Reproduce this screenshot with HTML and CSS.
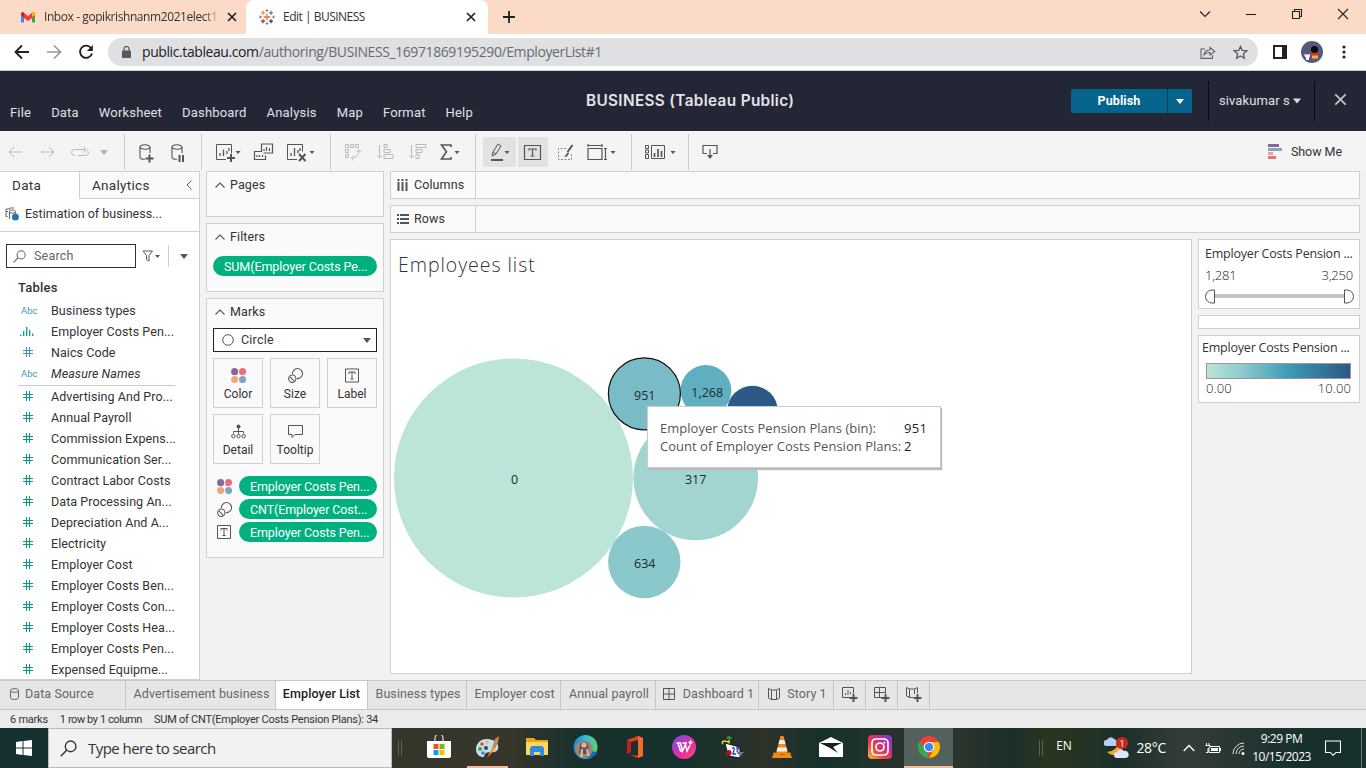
FILE: index.html
```html
<!DOCTYPE html>
<html lang="en">
<head>
<meta charset="utf-8">
<title>Edit | BUSINESS</title>
<link rel="stylesheet" href="styles.css">
</head>
<body>
<svg class="defs" width="0" height="0">
  <defs>
    <symbol id="hash" viewBox="0 0 10 10"><path d="M3.5 0v10M6.5 0v10M0 3.5h10M0 6.5h10" fill="none" stroke="currentColor" stroke-width="1.1"/></symbol>
    <symbol id="caret" viewBox="0 0 8 5"><path d="M0 0h8L4 5z" fill="currentColor"/></symbol>
    <symbol id="up" viewBox="0 0 10 6"><path d="M.5 5.5L5 1l4.500 4.500" fill="none" stroke="currentColor" stroke-width="1.1"/></symbol>
    <symbol id="dots" viewBox="0 0 14 14"><circle cx="3.400" cy="3.400" r="3.300" fill="#866a93"/><circle cx="10.800" cy="3.400" r="3.300" fill="#ee6e7d"/><circle cx="3.400" cy="10.800" r="3.300" fill="#f0a679"/><circle cx="10.800" cy="10.800" r="3.300" fill="#7fa5c4"/></symbol>
    <symbol id="size" viewBox="0 0 14 14"><g fill="none" stroke="currentColor"><path d="M4.200 5.700a4.700 4.700 0 1 1 4.200 4.200"/><circle cx="4" cy="10" r="3.400"/><path d="M1.800 8.200l4 4"/></g></symbol>
    <symbol id="label" viewBox="0 0 14 14"><g fill="none" stroke="currentColor"><path d="M.5.500h13v13H.5zM4 5.500v-2h6v2M7 3.500v7M5.500 10.500h3"/></g></symbol>
    <symbol id="zoomglass" viewBox="0 0 16 16"><circle cx="10" cy="6" r="5" fill="none" stroke="currentColor" stroke-width="1.300"/><path d="M6.500 9.500L.7 15.300" fill="none" stroke="currentColor" stroke-width="1.400"/></symbol>
    <symbol id="cross" viewBox="0 0 10 10"><path d="M1 1l8 8M9 1L1 9" fill="none" stroke="currentColor" stroke-width="1.700"/></symbol>
    <symbol id="cyl" viewBox="0 0 16 18"><g fill="none" stroke="currentColor" stroke-width="1.100"><ellipse cx="6" cy="3" rx="5" ry="2.200"/><path d="M1 3v10c0 1.500 2.500 2.300 5 2.300M11 3v6"/></g></symbol>
    <linearGradient id="insta" x1="0" y1="1" x2="1" y2="0"><stop offset="0" stop-color="#fdc046"/><stop offset=".35" stop-color="#f0443e"/><stop offset=".65" stop-color="#c82b91"/><stop offset="1" stop-color="#6b3ddd"/></linearGradient>
    <linearGradient id="wps" x1="0" y1="0" x2="1" y2="1"><stop offset="0" stop-color="#6b4cf0"/><stop offset=".6" stop-color="#e92f9b"/><stop offset="1" stop-color="#fb4f71"/></linearGradient>
    <linearGradient id="edge" x1="0" y1="0" x2="1" y2="0"><stop offset="0" stop-color="#1a82cf"/><stop offset=".5" stop-color="#30bcdc"/><stop offset="1" stop-color="#5bd75f"/></linearGradient>
  </defs>
</svg>

<div class="tabstrip">
  <div class="tab">
    <svg class="gmail" width="14" height="11" viewBox="0 0 14 11"><path d="M0 2v8.500h3V4z" fill="#4285f4"/><path d="M14 2v8.500h-3V4z" fill="#34a853"/><path d="M0 1.500V4l7 5 7-5V1.500L12 0 7 4 2 0z" fill="#ea4335"/><path d="M11 .8V5l3-2V1.500Q13-.5 11 .8" fill="#fbbc04"/><path d="M3 .8V5L0 3V1.500Q1-.5 3 .8" fill="#c5221f"/></svg>
    <span class="tab-title faded">Inbox - gopikrishnanm2021elect1</span>
    <svg class="tab-x" width="10" height="10"><use href="#cross"/></svg>
  </div>
  <div class="tab active">
    <svg width="16" height="16" viewBox="0 0 16 16" fill="none" stroke-width="1.300"><path d="M8 4.500v7M4.500 8h7" stroke="#e8762d"/><path d="M4 1.800v4M2 3.800h4" stroke="#e8932d"/><path d="M12 1.800v4M10 3.800h4" stroke="#597e9b"/><path d="M4 10.200v4M2 12.200h4" stroke="#c72035"/><path d="M12 10.200v4M10 12.200h4" stroke="#1f447e"/><path d="M8 0v3M6.500 1.500h3M8 13v3M6.500 14.500h3M0 8h3M1.500 6.500v3M13 8h3M14.500 6.500v3" stroke="#6f88a8" stroke-width="1"/></svg>
    <span class="tab-title">Edit | BUSINESS</span>
    <svg class="tab-x" width="10" height="10"><use href="#cross"/></svg>
  </div>
  <svg class="newtab" width="12" height="12" viewBox="0 0 12 12"><path d="M6 0v12M0 6h12" stroke="#222" stroke-width="1.800"/></svg>
  <div class="winctl">
    <svg width="12" height="12" viewBox="0 0 12 12"><path d="M1 3.500l5 5 5-5"/></svg>
    <svg width="12" height="12" viewBox="0 0 12 12"><path d="M1 6.500h10"/></svg>
    <svg width="12" height="12" viewBox="0 0 12 12"><path d="M1.500 3.500h7v7h-7zM3.500 3V1.500h7v7H9"/></svg>
    <svg width="12" height="12" viewBox="0 0 12 12"><path d="M1 1l10 10M11 1L1 11"/></svg>
  </div>
</div>

<div class="navbar">
  <svg class="nav-i" width="16" height="16" viewBox="0 0 16 16"><path d="M15 8H2M8 1.500L1.500 8 8 14.500" fill="none" stroke="#222" stroke-width="1.900"/></svg>
  <svg class="nav-i" width="16" height="16" viewBox="0 0 16 16"><path d="M1 8h13M8 1.500L14.500 8 8 14.500" fill="none" stroke="#999" stroke-width="1.700"/></svg>
  <svg class="nav-i" width="16" height="16" viewBox="0 0 16 16"><path d="M13 4A6.100 6.100 0 1 0 14 9.500" fill="none" stroke="#222" stroke-width="1.900"/><path d="M14.900 1v6h-6z" fill="#222"/></svg>
  <div class="omnibox">
    <svg width="9" height="12" viewBox="0 0 9 12"><path d="M2 5V3a2.500 2.500 0 0 1 5 0v2" fill="none" stroke="#55585c" stroke-width="1.200"/><rect y="4.500" width="9" height="7.500" rx="1" fill="#55585c"/></svg>
    <span class="url"><b>public.tableau.com</b>/authoring/BUSINESS_16971869195290/EmployerList#1</span>
    <svg class="share" width="16" height="14" viewBox="0 0 16 14"><path d="M5 4H1v9.400h11.500V10M4 10c.5-4 3-5 6-5V2.500L14.800 6.500 10 10V7.500c-3 0-4.500.5-6 2.500z" fill="none" stroke="#5f6368" stroke-width="1.100"/></svg>
    <svg width="15" height="15" viewBox="0 0 15 15"><path d="M7.500 1.500l1.800 4 4.500.4-3.400 2.900 1 4.400-3.900-2.300-3.900 2.300 1-4.400L1.200 5.900l4.500-.4z" fill="none" stroke="#55585c" stroke-width="1.300"/></svg>
  </div>
  <svg class="side-i" width="14" height="14" viewBox="0 0 14 14"><path d="M1 1h12v12H1z" fill="none" stroke="#222" stroke-width="2"/><path d="M9 0h5v14H9z" fill="#222"/></svg>
  <svg class="avatar" width="22" height="22" viewBox="0 0 22 22"><circle cx="11" cy="11" r="11" fill="#57597b"/><rect x="10" y="10" width="7" height="5" rx="1" fill="#d8322b"/><path d="M11 14.500h6v3h-6z" fill="#f0b43c"/><circle cx="13.500" cy="8.500" r="3.600" fill="#0c0b0e"/><path d="M3.500 12.500l1.300 1h2.700l1.300-1v3.500L8 16.500V19H5v-2.500L3.500 15z" fill="#fff"/></svg>
  <svg width="4" height="14" viewBox="0 0 4 14" fill="#222"><circle cx="2" cy="2" r="1.600"/><circle cx="2" cy="7" r="1.600"/><circle cx="2" cy="12" r="1.600"/></svg>
</div>

<header class="apphead">
  <nav class="menu"><span>File</span><span>Data</span><span>Worksheet</span><span>Dashboard</span><span>Analysis</span><span>Map</span><span>Format</span><span>Help</span></nav>
  <div class="doc-title">BUSINESS (Tableau Public)</div>
  <div class="head-right">
    <div class="publish"><span>Publish</span><i><svg width="8" height="5"><use href="#caret"/></svg></i></div>
    <div class="user">sivakumar s<svg width="8" height="6"><use href="#caret"/></svg></div>
    <svg class="closebook" width="13" height="13" viewBox="0 0 10 10"><path d="M1 1l8 8M9 1L1 9" fill="none" stroke="currentColor" stroke-width="1.300"/></svg>
  </div>
</header>

<div class="toolbar">
  <div class="tg g1 off">
    <svg width="14" height="12" viewBox="0 0 14 12"><path d="M14 6H1.500M6 1L1 6l5 5"/></svg>
    <svg width="14" height="12" viewBox="0 0 14 12"><path d="M0 6h12.500M8 1l5 5-5 5"/></svg>
    <svg width="19" height="12" viewBox="0 0 19 12"><path d="M4 9.500a3.500 3 0 0 1 0-6h10M12 .5l3.500 3L12 6.500M16 4a3.200 3 0 0 1-1.500 5.500H7"/></svg>
    <svg width="8" height="5"><use href="#caret"/></svg>
  </div>
  <div class="tg g2">
    <svg width="16" height="19" viewBox="0 0 16 19"><use href="#cyl" width="16" height="18"/><path d="M10.500 10.500v8M6.500 14.500h8" stroke-width="2"/></svg>
    <svg width="16" height="19" viewBox="0 0 16 19"><use href="#cyl" width="16" height="18"/><path d="M8.500 11v7M12 11v7" stroke-width="2"/></svg>
  </div>
  <div class="tg g3">
    <svg width="26" height="19" viewBox="0 0 26 19"><path d="M11 16.500H1.500v-15h15v9"/><path d="M5 13v-3M8.500 13V6.500M12 11V8M14 8V5" stroke-width="1.300"/><path d="M16 11v8M12 15h8" stroke-width="2"/><path d="M20.500 8h5L23 11z" class="f"/></svg>
    <svg width="19" height="18" viewBox="0 0 19 18"><path d="M7.500 9V1h11v9h-9M10 8V6M12.500 8V4M15.500 8V5M7 8.500H.5v8h11v-4M3 14v-2M5.500 14v-2M8.500 14v-2" stroke-width="1.200"/></svg>
    <svg width="28" height="19" viewBox="0 0 28 19"><path d="M11 16.500H1.500v-15h15v7"/><path d="M5 13v-3M8.500 13V5M12 10V7M14 8V5" stroke-width="1.300"/><path d="M13 11l6.500 7M19.500 11L13 18" stroke-width="2"/><path d="M23.500 8h5L26 11z" class="f"/></svg>
  </div>
  <div class="tg g4">
    <svg class="off" width="17" height="18" viewBox="0 0 17 18"><path d="M.5 1.500h3v3h-3zM5.500 1.500h3v3h-3zM10.500 1.500h3v3h-3zM.5 6.500h3v3h-3zM.5 11.500h3v3h-3zM14 7.500c0 4-3 7.500-7 7.500M12 9l2-2.500L16.500 9M9 12.500L6.500 15 9 17.500"/></svg>
    <svg class="off" width="17" height="16" viewBox="0 0 17 16"><path d="M2.500 1v13M0 11.500L2.500 14 5 11.500M7 .500h3v3H7zM7 5.500h6v3H7zM7 10.500h9v4H7z"/></svg>
    <svg class="off" width="17" height="16" viewBox="0 0 17 16"><path d="M2.500 1v13M0 11.500L2.500 14 5 11.500M7 .500h10v3H7zM7 5.500h6v3H7zM7 10.500h3v4H7z"/></svg>
    <svg width="20" height="16" viewBox="0 0 20 16"><path d="M11 3V1H1.500l5 6.800L1.500 15H11v-2" stroke-width="1.600"/><path d="M14.500 7h5L17 10z" class="f"/></svg>
  </div>
  <div class="tg g5">
    <span class="on"><svg width="20" height="18" viewBox="0 0 20 18"><path d="M2 13l1-4 5-8 3 2-5 8zM3 9l3 2"/><path d="M1 17h12" stroke-width="2"/><path d="M14.500 8h5L17 11z" class="f"/></svg></span>
    <span class="on b"><svg width="17" height="15" viewBox="0 0 17 15"><path d="M.5.500h16v14H.5zM5 5.500V4h7v1.500M8.500 4v7M6.500 11h4" stroke-width="1.200"/></svg></span>
    <svg width="17" height="17" viewBox="0 0 17 17"><path d="M9 4.500H1.500v11h13V9" stroke-dasharray="2 1.500" stroke="#888"/><path d="M15.500 1l-5 7" stroke-width="2"/><path d="M11 8l-3 4-1 1 3-.5 2-3z" class="f"/></svg>
    <svg width="28" height="17" viewBox="0 0 28 17"><path d="M1 4.500h14v11H1zM1 0v3M15 0v3M1 1.500h14M18.500 4.500v11M17 4.500h3M17 15.500h3" stroke-width="1.200"/><path d="M23.500 7h5L26 10z" class="f"/></svg>
  </div>
  <div class="tg g6"><svg width="31" height="16" viewBox="0 0 31 16"><path d="M.5 1.500h3v3h-3zM.5 6h3v3h-3zM.5 10.500h3v4h-3zM6.500 1.500h13v13h-13z"/><path d="M9.500 13V9M13 13V5M16.500 13V7" stroke-width="1.700"/><path d="M25.500 7h5L28 10z" class="f"/></svg></div>
  <div class="tg g7"><svg width="16" height="16" viewBox="0 0 16 16"><path d="M5 9.500H1v-8h14v8h-4M8 5v8" stroke-width="1.200"/><path d="M5 11h6l-3 4z" class="f"/></svg></div>
  <div class="showme"><svg width="14" height="15" viewBox="0 0 14 15"><path d="M0 0h11v3H0z" fill="#866a93"/><path d="M0 4h14v3H0z" fill="#7fa5c4"/><path d="M0 8h5v3H0z" fill="#f0a679"/><path d="M0 12h8v3H0z" fill="#ee6e7d"/></svg>Show Me</div>
</div>

<main class="work">
  <aside class="side">
    <div class="side-tabs"><span class="cur">Data</span><span>Analytics<svg width="6" height="10" viewBox="0 0 6 10"><path d="M5.500.5L1 5l4.500 4.500" fill="none" stroke="#555"/></svg></span></div>
    <div class="source"><svg width="14" height="14" viewBox="0 0 14 14"><path d="M2.500 9.500H1V2h3M4.500 12V4.500q0-1.500 3-1.500t3 1.500v2M4.500 5.500q3 1.500 6 0M3 4.500H1M9 1H4.500v1.500" fill="none" stroke="#666"/><circle cx="10.400" cy="10" r="3.500" fill="#1f77b4"/></svg>Estimation of business...</div>
    <div class="search-row">
      <div class="search"><svg width="13" height="13"><use href="#zoomglass"/></svg>Search</div>
      <svg class="funnel" width="18" height="12" viewBox="0 0 18 12"><path d="M1 1h9.500L7 5.500V11L4.500 9.500v-4z" fill="none" stroke="#555"/><path d="M13 5h5l-2.500 3z" fill="#555"/></svg>
      <i></i><svg class="g" width="8" height="5"><use href="#caret"/></svg>
    </div>
    <h4>Tables</h4>
    <ul class="fields dims">
      <li><em class="abc">Abc</em>Business types</li>
      <li class="green"><svg width="14" height="9" viewBox="0 0 14 9"><path d="M.7 9V7.500M3.700 9V4M6.700 9V0M9.700 9V3M12.700 9V6.500" stroke="currentColor" stroke-width="1.300"/></svg><span>Employer Costs Pen...</span></li>
      <li class="blue"><svg width="10" height="10"><use href="#hash"/></svg><span>Naics Code</span></li>
      <li class="it"><em class="abc">Abc</em>Measure Names</li>
    </ul>
    <ul class="fields green">
      <li><svg width="10" height="10"><use href="#hash"/></svg><span>Advertising And Pro...</span></li>
      <li><svg width="10" height="10"><use href="#hash"/></svg><span>Annual Payroll</span></li>
      <li><svg width="10" height="10"><use href="#hash"/></svg><span>Commission Expens...</span></li>
      <li><svg width="10" height="10"><use href="#hash"/></svg><span>Communication Ser...</span></li>
      <li><svg width="10" height="10"><use href="#hash"/></svg><span>Contract Labor Costs</span></li>
      <li><svg width="10" height="10"><use href="#hash"/></svg><span>Data Processing An...</span></li>
      <li><svg width="10" height="10"><use href="#hash"/></svg><span>Depreciation And A...</span></li>
      <li><svg width="10" height="10"><use href="#hash"/></svg><span>Electricity</span></li>
      <li><svg width="10" height="10"><use href="#hash"/></svg><span>Employer Cost</span></li>
      <li><svg width="10" height="10"><use href="#hash"/></svg><span>Employer Costs Ben...</span></li>
      <li><svg width="10" height="10"><use href="#hash"/></svg><span>Employer Costs Con...</span></li>
      <li><svg width="10" height="10"><use href="#hash"/></svg><span>Employer Costs Hea...</span></li>
      <li><svg width="10" height="10"><use href="#hash"/></svg><span>Employer Costs Pen...</span></li>
      <li><svg width="10" height="10"><use href="#hash"/></svg><span>Expensed Equipme...</span></li>
    </ul>
  </aside>

  <section class="cards">
    <div class="card pages"><h5><svg width="10" height="6"><use href="#up"/></svg>Pages</h5></div>
    <div class="card filters"><h5><svg width="10" height="6"><use href="#up"/></svg>Filters</h5><div class="pill">SUM(Employer Costs Pe...</div></div>
    <div class="card marks"><h5><svg width="10" height="6"><use href="#up"/></svg>Marks</h5>
      <div class="select"><svg width="12" height="12" viewBox="0 0 12 12"><circle cx="6" cy="6" r="5.300" fill="none" stroke="#555"/></svg><span>Circle</span><svg width="8" height="5"><use href="#caret"/></svg></div>
      <div class="btns">
        <div><svg width="15" height="15"><use href="#dots"/></svg>Color</div>
        <div><svg width="15" height="15"><use href="#size"/></svg>Size</div>
        <div><svg width="14" height="15"><use href="#label"/></svg>Label</div>
        <div><svg width="15" height="15" viewBox="0 0 15 15"><circle cx="7.500" cy="2.500" r="2" fill="#555"/><path d="M7.500 4v4M2.500 9.500V7.500h10v2M7.500 8v2" fill="none" stroke="#555"/><g fill="none" stroke="#555"><circle cx="2.300" cy="12.200" r="1.700"/><circle cx="7.500" cy="12.200" r="1.700"/><circle cx="12.700" cy="12.200" r="1.700"/></g></svg>Detail</div>
        <div><svg width="15" height="15" viewBox="0 0 15 15"><path d="M.5 1.500h14v9H7l-3 3v-3H.5z" fill="none" stroke="#555"/></svg>Tooltip</div>
      </div>
      <div class="enc"><svg width="15" height="15"><use href="#dots"/></svg><div class="pill">Employer Costs Pen...</div></div>
      <div class="enc"><svg width="15" height="15"><use href="#size"/></svg><div class="pill">CNT(Employer Cost...</div></div>
      <div class="enc"><svg width="15" height="15"><use href="#label" width="14" height="14"/></svg><div class="pill">Employer Costs Pen...</div></div>
    </div>
  </section>

  <section class="view">
    <div class="shelf"><span><svg width="11" height="12" viewBox="0 0 11 12"><path d="M1.500 0v2M5.500 0v2M9.500 0v2M1.500 3v9M5.500 3v9M9.500 3v9" stroke="#555" stroke-width="2"/></svg>Columns</span></div>
    <div class="shelf"><span><svg width="12" height="10" viewBox="0 0 12 10"><path d="M0 1h2M0 5h2M0 9h2M3 1h9M3 5h9M3 9h9" stroke="#555" stroke-width="1.800"/></svg>Rows</span></div>
    <div class="lower">
      <div class="sheet">
        <div class="sheet-title">Employees list</div>
        <svg class="plot" width="800" height="382" viewBox="391 291 800 382">
          <circle cx="513.500" cy="478" r="119.500" fill="#bce4d8"/>
          <circle cx="695.700" cy="478" r="62.300" fill="#a2d5d2"/>
          <circle cx="644.300" cy="562" r="36.200" fill="#8bc8cb"/>
          <circle cx="705.900" cy="390.500" r="25.400" fill="#5fafc0"/>
          <circle cx="752.500" cy="411" r="25.300" fill="#2c5985"/>
          <circle cx="644.400" cy="393.800" r="36" fill="#79bbc7" stroke="#111" stroke-width="1.200"/>
          <g class="nums"><text x="514.500" y="484">0</text><text x="644.800" y="400">951</text><text x="707.200" y="397">1,268</text><text x="695.700" y="484">317</text><text x="644.800" y="568">634</text></g>
        </svg>
        <div class="tip"><p><span>Employer Costs Pension Plans (bin):</span><b>951</b></p><p><span>Count of Employer Costs Pension Plans:</span><b>2</b></p></div>
      </div>
      <div class="legends">
        <div class="lg range"><p>Employer Costs Pension ...</p><div class="ends"><span>1,281</span><span>3,250</span></div>
          <svg width="149" height="15" viewBox="0 0 149 15"><path d="M9 7h131" stroke="#c4c4c4" stroke-width="4"/><path d="M9.500 1v13H7A6.500 6.500 0 0 1 7 1zM139.500 1v13h2.500a6.500 6.500 0 0 0 0-13z" fill="#fff" stroke="#555"/></svg></div>
        <div class="lg blank"></div>
        <div class="lg color"><p>Employer Costs Pension ...</p><div class="ramp"></div><div class="ends"><span>0.00</span><span>10.00</span></div></div>
      </div>
    </div>
  </section>
</main>

<footer class="sheets">
  <span class="s1"><svg width="9" height="12" viewBox="0 0 9 12"><g fill="none" stroke="#666"><ellipse cx="4.500" cy="2.500" rx="4" ry="1.900"/><path d="M.5 2.500v7q0 2 4 2t4-2v-7"/></g></svg>Data Source</span><span class="s2">Advertisement business</span><span class="s3">Employer List</span><span class="s4">Business types</span><span class="s5">Employer cost</span><span class="s6">Annual payroll</span><span class="s7"><svg width="12" height="12" viewBox="0 0 12 12"><path d="M.5.500h11v11H.5zM6 0v12M0 6h12" fill="none" stroke="#555"/></svg>Dashboard 1</span><span class="s8"><svg width="12" height="12" viewBox="0 0 12 12"><path d="M.5.500L3.500 2v9.500l-3-1.500zM3.500 2h5v9.500h-5M8.500 2l3-1.500V10l-3 1.500" fill="none" stroke="#555"/></svg>Story 1</span>
  <span class="add"><svg width="16" height="15" viewBox="0 0 16 15"><path d="M8 10.500H.5V.5h11v6M3.500 8V6M6 8V3M8.500 7V5"/><path d="M11.500 7v8M7.500 11h8" stroke-width="2"/></svg></span><span class="add"><svg width="16" height="15" viewBox="0 0 16 15"><path d="M8 10.500H.5V.5h11v6M5.500 0v11M0 5.500h12"/><path d="M11.500 7v8M7.500 11h8" stroke-width="2"/></svg></span><span class="add"><svg width="16" height="15" viewBox="0 0 16 15"><path d="M7 10.500H3.500l-3-1.500V.5l3 1.500h5l3-1.500V6M3.500 2v8.500M8.500 2v5"/><path d="M11.500 7v8M7.500 11h8" stroke-width="2"/></svg></span>
</footer>
<div class="status"><span>6 marks</span><span>1 row by 1 column</span><span>SUM of CNT(Employer Costs Pension Plans): 34</span></div>

<div class="taskbar">
  <div class="start"><svg width="16" height="16" viewBox="0 0 16 16" fill="#fff"><path d="M0 2l6.500-.9v6.400H0zM7.500 1L16 0v7.500H7.500zM0 8.500h6.500v6.400L0 14zM7.500 8.500H16V16l-8.500-1z"/></svg></div>
  <div class="tsearch"><svg width="17" height="17"><use href="#zoomglass"/></svg>Type here to search</div>
  <div class="grip"></div>
  <div class="apps">
    <span><svg width="24" height="24" viewBox="0 0 24 24"><path d="M8 6V3a4 4 0 0 1 8 0v3" fill="none" stroke="#ddd" stroke-width="1.200"/><path d="M0 6h24v15q0 2-2 2H2q-2 0-2-2z" fill="#fff"/><path d="M6.500 9h5v5h-5z" fill="#f25022"/><path d="M12.500 9h5v5h-5z" fill="#7fba00"/><path d="M6.500 15h5v5h-5z" fill="#00a4ef"/><path d="M12.500 15h5v5h-5z" fill="#ffb900"/></svg></span>
    <span class="run"><svg width="24" height="24" viewBox="0 0 24 24"><path d="M11 4C4 4 0 9 0 14c0 4 2 7 6 8 3 1 2-3 4-4 3-2 10 1 12-4 2-6-5-10-11-10z" fill="#c6e0ef"/><circle cx="4" cy="14" r="2" fill="#37a541"/><circle cx="6" cy="9" r="1.800" fill="#e14a37"/><circle cx="11" cy="7" r="1.800" fill="#f5b82e"/><circle cx="10" cy="13" r="2" fill="#324963"/><circle cx="7" cy="18" r="1.700" fill="#3d7dd8"/><path d="M11 23l5-10 3 1z" fill="#f39a2b"/><path d="M16 13l3-9 4-3-1 6-3 7z" fill="#c98a4b"/></svg></span>
    <span><svg width="22" height="20" viewBox="0 0 22 20"><path d="M0 1h8l2 2h12v15H0z" fill="#e8a713"/><path d="M0 5h22v13H0z" fill="#ffd75e"/><path d="M4 19v-8l2-2h10l2 2v8h-4v-4H8v4z" fill="#2f8de0"/></svg></span>
    <span><svg width="25" height="24" viewBox="0 0 25 24"><circle cx="12.500" cy="12" r="12" fill="url(#edge)"/><path d="M11 23q12 0 13-6l-8-1z" fill="#1268b4"/><circle cx="11" cy="14" r="8.800" fill="#9e8478"/><path d="M7 9q4-5 8 0l1 10H6z" fill="#66504b"/><circle cx="11" cy="10" r="2.700" fill="#d5b4a2"/><path d="M8 14h2v8H7zM13 14h2l2 7h-3z" fill="#d5b4a2"/></svg></span>
    <span><svg width="20" height="24" viewBox="0 0 20 24"><path d="M2 5L13 1l5 2v18l-5 2-8-3 8 .5V5L6 7v10l-4 2z" fill="#e23d18"/><path d="M13 1l5 2v18l-5 2z" fill="#f36c2b"/><path d="M2 5l4 2v10l-4 2z" fill="#bd1e20"/></svg></span>
    <span><svg width="24" height="24" viewBox="0 0 24 24"><circle cx="12" cy="12" r="12" fill="url(#wps)"/><path d="M4.500 8h4l2 8L14 8h-3.500M13 8l2 8 3-6M16.500 7.500h4M18.500 5.500v4M6 8l2.500 8H11" fill="none" stroke="#fff" stroke-width="1.500"/></svg></span>
    <span><svg width="24" height="24" viewBox="0 0 24 24"><path d="M5 3q3-4 6 0-2 3-6 0" fill="#2b9636"/><path d="M2 9q-2-2 1-3l5 1M8 5v5h-4" fill="none" stroke="#ded52c" stroke-width="1.500"/><path d="M4 8l15 4v11l-12-2z" fill="#f5f7ff" stroke="#111"/><path d="M19 17h4l-4 5z" fill="#777"/><path d="M11 13q3-1 2 2t-1 4h3M15 13h3l-2 3 2 3" fill="none" stroke="#2936a4" stroke-width="1.300"/><circle cx="7.500" cy="18" r="3" fill="#941c27"/></svg></span>
    <span><svg width="22" height="24" viewBox="0 0 22 24"><path d="M9.500 1h3l4.500 18H5z" fill="#f58b15"/><path d="M8.500 5h5l1 4h-7zM6.500 12.500h9l1 4h-11z" fill="#eee"/><path d="M3 17l-2 6h20l-2-6q-8 5-16 0" fill="#f28a10"/></svg></span>
    <span><svg width="24" height="20" viewBox="0 0 24 20"><path d="M0 6l12-6 12 6v14H0z" fill="#fff"/><path d="M1 6h22l-9 4 5 6-8-5z" fill="#17221f"/></svg></span>
    <span><svg width="24" height="24" viewBox="0 0 24 24"><rect width="24" height="24" rx="4" fill="url(#insta)"/><rect x="4" y="4" width="16" height="16" rx="4" fill="none" stroke="#fff" stroke-width="1.700"/><circle cx="12" cy="12" r="4" fill="none" stroke="#fff" stroke-width="1.700"/><circle cx="16.500" cy="7.500" r="1" fill="#fff"/></svg></span>
    <span class="act"><svg width="22" height="22" viewBox="0 0 22 22"><circle cx="11" cy="11" r="11" fill="#e94235"/><path d="M1.500 5.500L8 13l3 9A11 11 0 0 1 1.500 5.500" fill="#34a853"/><path d="M11 6h9.800A11 11 0 0 1 11 22l5-9z" fill="#fbbc05"/><circle cx="11" cy="11" r="5.300" fill="#fff"/><circle cx="11" cy="11" r="4.200" fill="#4285f4"/></svg></span>
  </div>
  <div class="tray">
    <div class="grip"></div><span class="lang">EN</span>
    <svg class="weather" width="25" height="24" viewBox="0 0 25 24"><path d="M16 5a8 8 0 1 1-13 11q9 0 13-11" fill="#f6a52e"/><path d="M2 10a3 3 0 0 1 1-6 4 4 0 0 1 7-1 4 4 0 0 1 2 7z" fill="#b8cdf1"/><path d="M13 22a3 3 0 0 1 0-6 4 4 0 0 1 7-1 3.500 3.500 0 0 1 2 7z" fill="#dbe8ff"/><circle cx="18" cy="7" r="6" fill="#c8281e"/><text x="18" y="10.500" text-anchor="middle" font-size="9" fill="#fff">1</text></svg>
    <span class="temp">28°C</span>
    <svg class="chev" width="12" height="8" viewBox="0 0 12 8"><path d="M.7 7L6 1.500 11.300 7" fill="none" stroke="#fff" stroke-width="1.300"/></svg>
    <svg class="bat" width="16" height="11" viewBox="0 0 16 11"><path d="M5 3.500h9.500v6H4V6M15.500 5v3M1.500 0v2M4 0v2M.5 2.500h4.500v2l-2 1v4h-2" fill="none" stroke="#fff"/><path d="M6 5h7v3H6z" fill="#fff"/></svg>
    <svg class="wifi" width="13" height="13" viewBox="0 0 13 13"><path d="M1 12A11 11 0 0 1 12 1M4 12a8 8 0 0 1 8-8M7 12a5 5 0 0 1 5-5" fill="none" stroke="#ddd"/><circle cx="11" cy="11.500" r="1.500" fill="#fff"/></svg>
    <div class="clock"><span>9:29 PM</span><span>10/15/2023</span></div>
    <svg class="notif" width="16" height="16" viewBox="0 0 16 16"><path d="M.5 1h15v11.500H11L8 15.300 5.500 12.500h-5z" fill="none" stroke="#fff" stroke-width="1.100"/></svg>
    <div class="peek"></div>
  </div>
</div>
</body>
</html>
```
FILE: styles.css
```css
* { box-sizing: border-box; }
body { margin: 0; width: 1366px; height: 768px; overflow: hidden; display: flex; flex-direction: column; background: #f2f2f2; color: #333; font: 12px/16px Roboto, Inter, sans-serif; letter-spacing: .4px; }
svg { flex: none; display: block; }
.defs { position: absolute; }
h4, h5, p, ul { margin: 0; padding: 0; font-weight: 400; }
span, div { white-space: nowrap; }

/* browser chrome */
.tabstrip { height: 34px; flex: none; display: flex; align-items: center; background: #fcdac8; font: 12px/16px "Open Sans", sans-serif; letter-spacing: 0; color: #333; }
.tab { width: 246px; height: 34px; display: flex; align-items: center; padding: 0 10px 0 21px; }
.tab.active { width: 242px; background: #fff; border-radius: 8px 8px 0 0; padding: 0 12px 0 13px; }
.gmail { margin-right: 9px; }
.active .tab-title { margin-left: 8px; letter-spacing: -.5px; }
.tab-title { flex: 1; }
.faded { flex: none; width: 177px; margin-right: 6px; letter-spacing: -.42px; -webkit-mask-image: linear-gradient(90deg, #000 90%, transparent); }
.tab-x { color: #222; }
.newtab { margin-left: 15px; }
.winctl { margin: -6px 17px 0 auto; display: flex; gap: 34px; }
.winctl path { fill: none; stroke: #222; stroke-width: 1.1; }
.navbar { height: 37px; flex: none; display: flex; align-items: center; background: #fff; padding: 0 20px 0 14px; border-bottom: 1px solid #ccc; }
.nav-i { margin-right: 16px; }
.omnibox { width: 1150px; height: 28px; margin: 0 15px 0 -2px; padding: 0 10px 0 14px; border-radius: 14px; background: #dfe0e3; display: flex; align-items: center; font: 14px/18px "Open Sans", sans-serif; letter-spacing: -.41px; color: #686b70; }
.url { flex: 1; margin-left: 11px; }
.url b { font-weight: 400; color: #222; }
.share { margin-right: 17px; }
.avatar { margin: 0 19px 0 14px; }

/* application header */
.apphead { height: 59px; flex: none; display: flex; background: #232635; color: #e0e0e4; }
.menu { display: flex; gap: 20px; padding: 34px 0 0 10px; font-size: 13px; letter-spacing: .18px; width: 586px; }
.doc-title { padding-top: 21px; font: 600 15.3px/18px Inter, sans-serif; color: #e4e4e8; letter-spacing: .35px; }
.head-right { margin-left: auto; display: flex; padding-top: 10px; }
.publish { display: flex; height: 24px; margin-top: 8px; width: 121px; border-radius: 2px; overflow: hidden; background: #05638c; color: #fff; font-weight: 700; font-size: 12.5px; line-height: 24px; letter-spacing: .1px; }
.publish span { width: 97px; text-align: center; border-right: 1px solid #163b52; }
.publish i { flex: 1; display: grid; place-items: center; }
.user { height: 40px; margin-left: 16px; border-left: 1px solid #0a0b12; border-right: 1px solid #0a0b12; width: 107px; padding-left: 10px; display: flex; align-items: center; gap: 3px; font-size: 13px; letter-spacing: .1px; }
.closebook { color: #c5c6cc; margin: 12px 19px 0 19px; }

.toolbar { height: 41px; flex: none; display: flex; background: #f4f4f4; border-top: 1px solid #2a2438; padding-top: 3px; color: #555; }
.tg { height: 36px; display: flex; align-items: center; border-right: 1px solid #ccc; }
.tg svg { fill: none; stroke: #555; overflow: visible; }
.tg .f { fill: #555; stroke: none; }
.tg use { stroke: none; color: #555; }
.g1.off svg, .tg svg.off { stroke: #b9b9b9; }
.g1.off use { color: #b0b0b0; }
.g1 { width: 125px; padding-left: 8px; }
.g1 svg { margin-right: 19px; }
.g1 svg:nth-child(2) { margin-right: 16px; }
.g1 svg:nth-child(3) { margin-right: 10px; }
.g1 svg:last-child { margin: 0; }
.g2 { width: 77px; padding-left: 14px; gap: 16px; }
.g2 svg { margin-top: 2px; }
.g3 { width: 129px; padding-left: 13px; gap: 13px; }
.g4 { width: 145px; padding-left: 14px; gap: 15px; }
.g4 svg:last-child { margin-left: -1px; }
.g5 { width: 156px; padding-left: 7px; }
.on { width: 33px; height: 30px; margin-right: 2px; background: #e2e2e2; display: grid; place-items: center; }
.on.b { width: 30px; margin-right: 9px; padding-right: 1px; }
.g5 > svg { margin-right: 13px; }
.g6 { width: 57px; padding-left: 13px; }
.g7 { padding-left: 13px; border: 0; }
.showme { margin-left: auto; padding-right: 24px; display: flex; align-items: center; gap: 9px; font-size: 12.5px; letter-spacing: -.05px; color: #333; margin-top: -2px; }

/* workspace */
.work { height: 509px; flex: none; display: flex; }
.side { width: 200px; flex: none; background: #fff; border: 1px solid #d0d0d0; border-left: 0; overflow: hidden; }
.side-tabs { display: flex; height: 27px; font-size: 13.5px; line-height: 26px; letter-spacing: .3px; }
.side-tabs span { flex: 1; padding: 0 7px 0 12px; display: flex; align-items: center; justify-content: space-between; background: #fafafa; border-left: 1px solid #d0d0d0; border-bottom: 1px solid #d0d0d0; }
.side-tabs .cur { flex: none; width: 79px; background: #fff; border: 0; padding-bottom: 2px; }
.source { height: 33px; border-bottom: 1px solid #d0d0d0; display: flex; align-items: center; gap: 6px; padding-left: 5px; padding-bottom: 3px; font-size: 12.5px; letter-spacing: 0; }
.search-row { display: flex; align-items: center; height: 24px; margin: 12px 0 0 6px; }
.search { width: 130px; height: 24px; border: 1px solid #333; display: flex; align-items: center; gap: 8px; padding-left: 6px; font-size: 12.5px; letter-spacing: .2px; color: #666; }
.funnel { margin-left: 6px; }
.search-row i { width: 1px; height: 22px; background: #d0d0d0; margin: 0 11px 0 8px; }
.g { color: #555; }
h4 { font-size: 13px; line-height: 16px; margin: 12px 0 4px 18px; letter-spacing: .2px; font-weight: 500; }
.fields { list-style: none; }
.fields li { height: 21px; display: flex; align-items: center; font-size: 12.5px; letter-spacing: .07px; color: #333; padding-left: 51px; }
.fields li svg { margin: -2px 18px 0 -28px; }
.fields li svg[width="14"] { margin: -1px 17px 0 -31px; }
.fields li span { color: #333; }
.dims { border-bottom: 1px solid #ccc; margin: 0 24px 0 18px; padding-bottom: 1px; }
.dims li { padding-left: 33px; }
.green svg { color: #12957c; }
.blue svg { color: #4996b2; }
.abc { font-style: normal; font-size: 9.5px; color: #4996b2; margin-left: -30px; width: 30px; letter-spacing: 0; }
.fields .it { font-style: italic; letter-spacing: .07px; }

.cards { width: 178px; margin-left: 6px; flex: none; display: flex; flex-direction: column; gap: 6px; }
.card { border: 1px solid #d0d0d0; background: #fafafa; padding: 0 6px; }
.pages { height: 46px; }
.filters { height: 69px; }
.marks { height: 260px; }
h5 { height: 26px; display: flex; align-items: center; gap: 5px; padding-left: 2px; font-size: 12.5px; letter-spacing: .1px; }
h5 svg { color: #555; }
.pill { height: 20px; border-radius: 10px; background: #00b180; color: #fff; padding: 0 0 0 11px; line-height: 21px; font-size: 12.5px; letter-spacing: -.1px; flex: 1; min-width: 0; }
.filters .pill { margin-top: 6px; letter-spacing: -.08px; }
.select { height: 24px; margin: 3px 0 6px; border: 1px solid #222; background: #fff; padding: 0 5px 0 8px; display: flex; align-items: center; gap: 7px; font-size: 12.5px; letter-spacing: .2px; }
.select span { flex: 1; }
.select svg:last-child { color: #555; }
.btns { display: grid; grid-template-columns: 50px 50px 50px; grid-auto-rows: 50px; gap: 6px 7px; margin-bottom: 12px; }
.btns div { border: 1px solid #d0d0d0; display: flex; flex-direction: column; align-items: center; padding-top: 9px; gap: 4px; color: #333; font-size: 12px; letter-spacing: 0; line-height: 14px; }
.btns svg, .enc svg { color: #555; }
.enc { display: flex; align-items: center; height: 20px; margin-bottom: 3px; gap: 7px; padding-left: 4px; }

.view { margin-left: 6px; width: 970px; display: flex; flex-direction: column; gap: 6px; }
.shelf { height: 28px; flex: none; border: 1px solid #d0d0d0; background: #fafafa; display: flex; }
.shelf span { width: 85px; border-right: 1px solid #d0d0d0; display: flex; align-items: center; gap: 5px; padding-left: 6px; font-size: 12.5px; letter-spacing: .1px; }
.shelf span svg { margin-right: 1px; }
.shelf + .shelf span svg { margin-right: 0; }
.lower { display: flex; gap: 6px; }
.sheet { position: relative; width: 802px; height: 435px; background: #fff; border: 1px solid #d0d0d0; }
.sheet-title { height: 51px; padding: 12px 0 0 7px; font: 300 19.5px/26px "Open Sans", sans-serif; letter-spacing: .95px; color: #333; }
.nums text { font: 400 12.5px "Open Sans", sans-serif; text-anchor: middle; fill: #1c2b2e; letter-spacing: 0; }
.tip { position: absolute; left: 256px; top: 166px; width: 294px; height: 62px; background: #fff; border: 1px solid #ccc; box-shadow: 1px 2px 1px #bbb; padding: 12px 0 0 12px; font: 300 13px/18px "Open Sans", sans-serif; letter-spacing: .02px; color: #555; }
.tip p { display: flex; }
.tip span { width: 244px; }
.tip b { font-weight: 400; color: #222; letter-spacing: .3px; }
.legends { width: 162px; display: flex; flex-direction: column; gap: 6px; color: #333; font: 12.5px/16px "Open Sans", sans-serif; letter-spacing: -.21px; }
.lg { background: #fff; border: 1px solid #d0d0d0; }
.range { height: 70px; padding: 6px 6px 0; }
.blank { height: 14px; }
.color { height: 68px; padding: 4px 8px 0 3px; }
.ends { display: flex; justify-content: space-between; font-weight: 300; font-size: 13px; margin-top: 5px; color: #222; }
.range svg { margin-top: 6px; }
.ramp { height: 16px; margin: 7px 0 0 4px; border: 1px solid #999; background: linear-gradient(90deg, #bce4d8, #8bcacf 25%, #3c99b5 58%, #2c5985); }
.color .ends { margin: 1px 0 0 4px; letter-spacing: .1px; }

/* sheet tabs */
.sheets { height: 30px; flex: none; display: flex; border-top: 1px solid #c6c6c6; border-bottom: 1px solid #c6c6c6; background: #e6e6e6; color: #666; font-size: 12.5px; letter-spacing: .08px; }
.sheets span { border-right: 1px solid #c6c6c6; display: flex; align-items: center; justify-content: center; gap: 7px; padding-bottom: 2px; }
.sheets .s1 { width: 126px; justify-content: flex-start; padding-left: 10px; gap: 6px; }
.s2 { width: 150px; }
.sheets .s3 { width: 92px; background: #fff; color: #222; font-weight: 500; letter-spacing: .1px; }
.s4 { width: 99px; } .s5 { width: 94px; } .s6 { width: 95px; } .s7 { width: 103px; } .s8 { width: 75px; }
.sheets .s2, .sheets .s4, .sheets .s5, .sheets .s6 { padding-left: 2px; }
.sheets .s7, .sheets .s8 { padding-left: 3px; }
.sheets .s7 { gap: 8px; }
.add { width: 32px; }
.add svg { fill: none; stroke: #555; }
.status { height: 18px; flex: none; background: #ebebeb; display: flex; gap: 12px; padding-left: 10px; font-size: 11px; line-height: 19px; letter-spacing: -.24px; color: #333; }
.status span:nth-child(2) { letter-spacing: -.42px; }

/* taskbar */
.taskbar { height: 40px; flex: none; display: flex; color: #fff; background: linear-gradient(90deg, #15302e 0 4%, #34352a 28%, #38362b 37%, #19312d 42%, #15312d 50%, #2e3229 56%, #16302c 60%, #30352a 69%, #1b302c 74%, #2a351f 77%, #1c3029 82%, #343c38 87%, #17302e 95%); font-family: "Open Sans", sans-serif; letter-spacing: -.3px; }
.start { width: 48px; display: grid; place-items: center; }
.tsearch { width: 344px; background: #f2f2f2; border: 1px solid #bbb; color: #333; display: flex; align-items: center; gap: 11px; padding-left: 11px; font-size: 15px; letter-spacing: -.55px; }
.grip { width: 4px; height: 16px; border: 1px solid #5d6055; border-width: 0 1px; margin: 12px 14px 0 6px; }
.apps { display: flex; margin-left: -2px; }
.apps span { width: 49px; display: grid; place-items: center; border-bottom: 2px solid transparent; }
.apps .run { background: linear-gradient(#f5b99d, #f5b99d) 4px 100% / 41px 2px no-repeat border-box; }
.apps .act { background: #53615c; border-color: #f5b99d; }
.tray { margin-left: auto; display: flex; align-items: center; }
.tray .grip { margin: 0 11px 0 0; }
.lang { margin: -4px 33px 0 2px; font-size: 12px; }
.temp { margin: 0 17px 0 7px; font-size: 14px; }
.bat { margin: 0 11px 0 10px; }
.wifi { margin-right: 8px; }
.clock { width: 57px; text-align: center; font-size: 12px; line-height: 18px; display: flex; flex-direction: column; align-items: center; letter-spacing: -.5px; }
.notif { margin: 0 20px 0 15px; }
.peek { width: 5px; height: 40px; border-left: 1px solid #6e7976; }
```
